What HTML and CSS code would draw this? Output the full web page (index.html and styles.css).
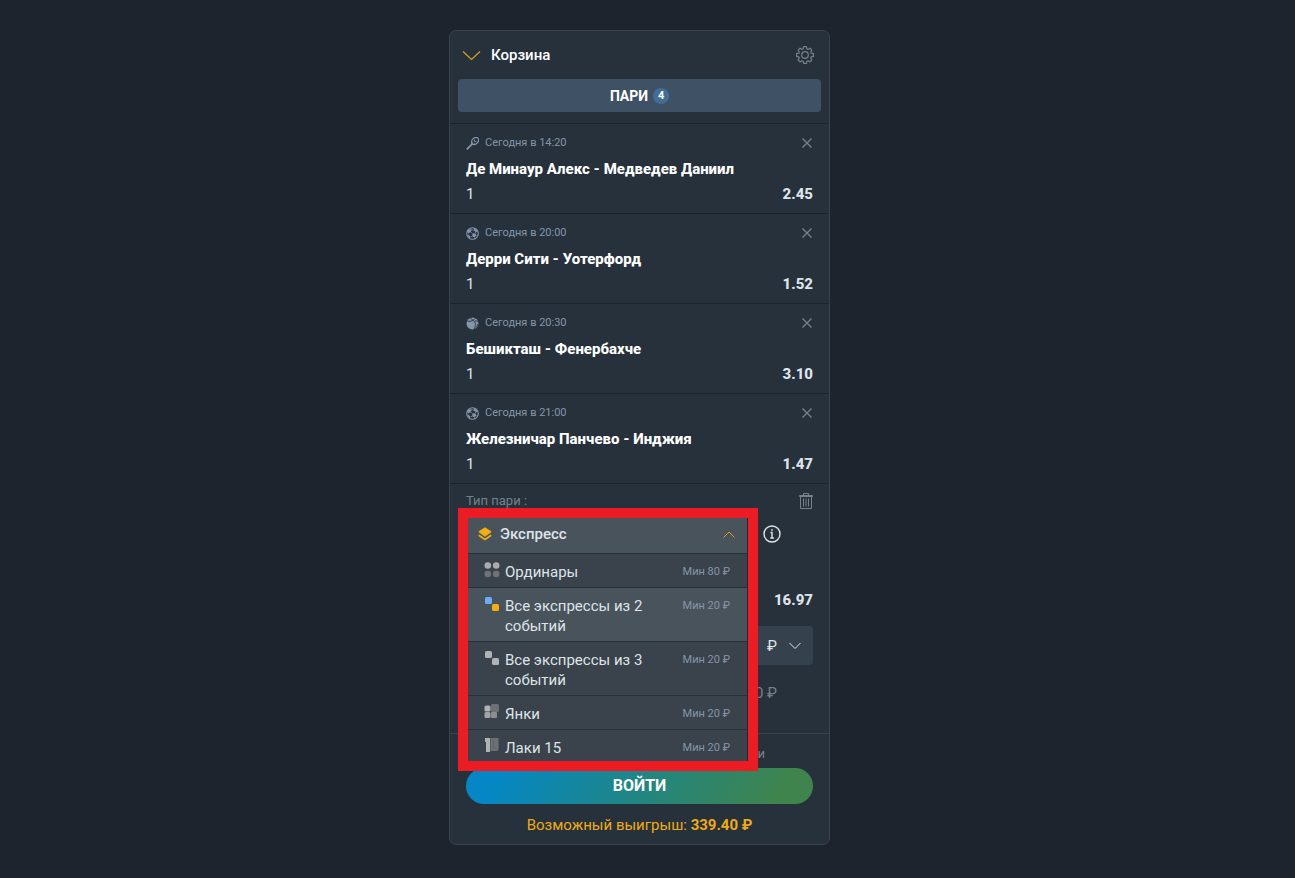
FILE: index.html
```html
<!DOCTYPE html>
<html lang="ru">
<head>
<meta charset="utf-8">
<meta name="viewport" content="width=device-width, initial-scale=1">
<title>Корзина</title>
<link rel="stylesheet" href="styles.css">
</head>
<body>
<svg class="defs" aria-hidden="true">
  <symbol id="close" viewBox="0 0 12 12"><path d="M1.5 1.5l9 9M10.5 1.5l-9 9" fill="none" stroke="currentColor" stroke-width="1.4"/></symbol>
  <symbol id="football" viewBox="0 0 13 13"><circle cx="6.5" cy="6.5" r="5.8" fill="none" stroke="currentColor" stroke-width="1.1"/><path d="M1 4.500L3 2.200l3.200.3L4.500 5 2.600 6.500zM7.800 1l3 1.700.9 2.500-2-.3-1.800-1.400zM6.500 6.500l2.800-.3 1 2.400-1.800 1.900-2.300-1.300zM1 7.500l2 .6 1.200 2L3.700 11.700z" fill="currentColor"/><path d="M6.200 2.500l1.700 1M4.500 5l2 1.500M9.300 6.200l.6-1.300M4.200 10.100l2-.9M8.500 10.500V12M10.300 8.600l1.500.2" stroke="currentColor" stroke-width=".7"/></symbol>
</svg>
<main class="coupon">
  <header class="head">
    <div class="head-row">
      <button class="icon-btn" aria-label="Свернуть"><svg width="19" height="11" viewBox="0 0 19 11"><path d="M1 1.5l8.5 8L18 1.5" fill="none" stroke="#d9a017" stroke-width="1.2"/></svg></button>
      <h1 class="title">Корзина</h1>
      <button class="icon-btn settings" aria-label="Настройки"><svg width="18" height="18" viewBox="0 0 18 18" fill="none" stroke="currentColor" stroke-width="1.200"><path d="M7.6 .7h2.800l.5 2.200 1.200.5L14 2.200l1.900 1.900-1.200 1.900.5 1.200 2.200.4v2.800l-2.200.5-.5 1.200 1.200 1.900-1.900 1.900-1.900-1.200-1.200.5-.5 2.200H7.600l-.5-2.200-1.200-.5L4 15.900 2.100 14l1.200-1.900-.5-1.200-2.200-.5V7.600l2.200-.4.5-1.200L2.100 4.100 4 2.200l1.900 1.200 1.200-.5z" stroke-linejoin="round"/><circle cx="9" cy="9" r="3.300"/></svg></button>
    </div>
    <button class="tab">ПАРИ <span class="badge">4</span></button>
  </header>

  <article class="bet">
    <div class="bet-top"><svg class="sport" width="13" height="13" viewBox="0 0 13 13" fill="none" stroke="currentColor"><ellipse cx="9" cy="4" rx="4" ry="2.900" transform="rotate(-45 9 4)" stroke-width="1.200"/><path d="M6.200 4.500v2.500h2.500M8.500 2.500v2h2" stroke-width=".9"/><path d="M6.300 6.800L.8 12.300" stroke-width="1.800"/></svg><time>Сегодня в 14:20</time><button class="icon-btn close" aria-label="Удалить"><svg width="12" height="12"><use href="#close"/></svg></button></div>
    <h2 class="match">Де Минаур Алекс - Медведев Даниил</h2>
    <div class="pick"><span>1</span><strong>2.45</strong></div>
  </article>
  <article class="bet">
    <div class="bet-top"><svg class="sport" width="13" height="13"><use href="#football"/></svg><time>Сегодня в 20:00</time><button class="icon-btn close" aria-label="Удалить"><svg width="12" height="12"><use href="#close"/></svg></button></div>
    <h2 class="match">Дерри Сити - Уотерфорд</h2>
    <div class="pick"><span>1</span><strong>1.52</strong></div>
  </article>
  <article class="bet">
    <div class="bet-top"><svg class="sport" width="13" height="13" viewBox="0 0 13 13"><circle cx="6.500" cy="6.500" r="6" fill="currentColor"/><path d="M.5 3.800c3 1 6.500.5 9-2.500M3.500 .8c2 .5 3 1.500 3.500 3M7.500 3.800c2.500 2 2.500 5 .5 8.500M8.500 4.200c1.500-.5 3-.3 4 .8M11.800 7c-.5 2-1 3-2 4.500" fill="none" stroke="#26313c" stroke-width=".9"/></svg><time>Сегодня в 20:30</time><button class="icon-btn close" aria-label="Удалить"><svg width="12" height="12"><use href="#close"/></svg></button></div>
    <h2 class="match">Бешикташ - Фенербахче</h2>
    <div class="pick"><span>1</span><strong>3.10</strong></div>
  </article>
  <article class="bet">
    <div class="bet-top"><svg class="sport" width="13" height="13"><use href="#football"/></svg><time>Сегодня в 21:00</time><button class="icon-btn close" aria-label="Удалить"><svg width="12" height="12"><use href="#close"/></svg></button></div>
    <h2 class="match">Железничар Панчево - Инджия</h2>
    <div class="pick"><span>1</span><strong>1.47</strong></div>
  </article>

  <section class="stake">
    <div class="stake-top"><span>Тип пари :</span><button class="icon-btn" aria-label="Очистить"><svg width="14" height="16" viewBox="0 0 14 16" fill="none" stroke="currentColor"><path d="M.5 3.500V2.500h13v1zM4.500 2.500v-2h5v2M1.500 3.500v12h11v-12M4.500 5.500v8M7 5.500v8M9.500 5.500v8"/></svg></button></div>
    <div class="info-row"><button class="icon-btn info" aria-label="Информация"><svg width="18" height="18" viewBox="0 0 18 18" fill="none" stroke="currentColor" stroke-width="1.400"><circle cx="9" cy="9" r="8"/><path d="M7.500 7.500H9v5.500M7.300 13h3.600M8.200 5h1.600"/></svg></button></div>
    <div class="total">16.97</div>
    <div class="money"><button class="currency" aria-label="Валюта">₽ <svg width="12" height="8" viewBox="0 0 12 8"><path d="M.5 1L6 6.500 11.500 1" fill="none" stroke="currentColor"/></svg></button></div>
    <div class="limit">00 ₽</div>

    <div class="picker">
      <button class="picker-head" aria-expanded="true"><svg width="14" height="14" viewBox="0 0 14 14"><path d="M7 .8l6.200 4L7 9.200.8 4.800z" fill="#f5ae0c" stroke="#f5ae0c" stroke-linejoin="round"/><path d="M.8 8.300L7 12.500l6.200-4.200" fill="none" stroke="#f5ae0c" stroke-width="1.700"/></svg><span>Экспресс</span><svg class="up" width="12" height="7" viewBox="0 0 12 7"><path d="M.5 6.500L6 1l5.500 5.500" fill="none" stroke="#d9a017"/></svg></button>
      <ul class="options">
        <li><button class="option"><svg width="16" height="16" viewBox="0 0 16 16"><g fill="#aaadb0"><circle cx="3.800" cy="3.500" r="3.300"/><circle cx="12.200" cy="3.500" r="3.300"/></g><g fill="#6f7375"><circle cx="3.800" cy="12" r="3.300"/><circle cx="12.200" cy="12" r="3.300"/></g></svg><span class="name">Ординары</span><span class="min">Мин 80 ₽</span></button></li>
        <li><button class="option active"><svg width="16" height="16" viewBox="0 0 16 16"><rect x="1" y="1" width="7" height="7" rx="1.500" fill="#69adf5"/><rect x="8" y="8" width="7" height="7" rx="1.500" fill="#f5ae0c"/></svg><span class="name">Все экспрессы из 2 событий</span><span class="min">Мин 20 ₽</span></button></li>
        <li><button class="option"><svg width="16" height="16" viewBox="0 0 16 16" fill="#b0b3b5"><rect x="1" y="1" width="7" height="7" rx="1.500"/><rect x="8" y="8" width="7" height="7" rx="1.500"/></svg><span class="name">Все экспрессы из 3 событий</span><span class="min">Мин 20 ₽</span></button></li>
        <li><button class="option"><svg width="16" height="16" viewBox="0 0 16 16"><rect x="7" y="0" width="8" height="8" rx="1.500" fill="#6d7173"/><rect x="7" y="8" width="6" height="6" rx="1" fill="#8a8e90"/><rect x=".5" y="1.500" width="6" height="6" rx="1.500" fill="#b0b3b5"/><rect x=".5" y="8" width="6" height="6" rx="1.500" fill="#a2a5a7"/></svg><span class="name">Янки</span><span class="min">Мин 20 ₽</span></button></li>
        <li><button class="option"><svg width="16" height="16" viewBox="0 0 16 16"><path d="M1 0h5v14H2V4H1z" fill="#b0b3b5"/><path d="M6.500 0H14.500v11q0 2-2 2h-6z" fill="#6d7173"/><path d="M9.500 2v8M9.500 10h3" fill="none" stroke="#5a6064" stroke-width=".8"/></svg><span class="name">Лаки 15</span><span class="min">Мин 20 ₽</span></button></li>
      </ul>
    </div>
  </section>

  <footer class="foot">
    <p class="terms">и</p>
    <button class="login">ВОЙТИ</button>
    <p class="win">Возможный выигрыш: <b>339.40 ₽</b></p>
  </footer>
</main>
</body>
</html>
```
FILE: styles.css
```css
* { box-sizing: border-box; }
body {
  margin: 0;
  min-height: 100vh;
  padding: 30px 16px 30px 0;
  background: #1e242e;
  color: #dfe4e8;
  font: 15px/20px Roboto, "Noto Sans", sans-serif;
}
h1, h2, p, ul { margin: 0; padding: 0; }
ul { list-style: none; }
button { font: inherit; color: inherit; border: 0; background: none; padding: 0; cursor: pointer; }
svg { display: block; flex: none; }
.defs { position: absolute; width: 0; height: 0; }
.coupon {
  width: 100%;
  max-width: 381px;
  margin: 0 auto;
  border: 1px solid #38434d;
  border-radius: 7px;
  background: #26313c;
}
.icon-btn { display: flex; color: #75818b; }
.head { padding: 12px 8px 11px; }
.head-row { display: flex; align-items: center; gap: 10px; height: 24px; padding: 0 7px 0 4px; }
.title { flex: 1; font-size: 15px; font-weight: 500; color: #fff; }
.tab {
  display: flex; align-items: center; justify-content: center; gap: 5px;
  width: 100%; height: 33px; margin-top: 12px;
  border-radius: 4px; background: #3f5165;
  color: #fff; font-size: 14px; font-weight: 700;
}
.badge { width: 16px; height: 16px; border-radius: 8px; background: #426d94; font-size: 11px; line-height: 16px; text-align: center; }
.bet { height: 90px; padding: 9px 16px 0; border-top: 1px solid #1b242d; }
.bet-top { display: flex; align-items: center; gap: 6px; height: 20px; color: #8595a8; font-size: 11px; line-height: 22px; }
.close { margin-left: auto; }
.match { margin-top: 6px; font-size: 15px; line-height: 20px; font-weight: 800; color: #fff; }
.pick { display: flex; justify-content: space-between; margin-top: 5px; }
.pick strong, .total { font-weight: 800; }
.stake { position: relative; height: 250px; padding: 8px 16px 0; border-top: 1px solid #1b242d; }
.stake-top { display: flex; align-items: center; justify-content: space-between; height: 18px; color: #75818b; font-size: 13px; }
.info-row { display: flex; justify-content: flex-end; height: 48px; padding: 15px 32px 0 0; }
.info { color: #dfe4e8; height: 18px; }
.total { margin-top: 32px; text-align: right; }
.money { display: flex; justify-content: flex-end; margin-top: 16px; }
.currency { display: flex; align-items: center; justify-content: flex-end; gap: 12px; width: 80px; height: 39px; padding-right: 12px; border-radius: 4px; background: #35414d; }
.limit { margin-top: 18px; padding-right: 36px; text-align: right; color: #75818b; }
.picker {
  position: absolute; left: 8px; top: 24px; z-index: 2;
  width: 300px; border: 10px solid #ed1c24; background: #1f2932; padding-right: 1px;
}
.picker-head { display: flex; align-items: center; gap: 8px; width: 100%; height: 35px; padding: 0 12px 3px 10px; background: #49535c; font-weight: 500; }
.up { margin-left: auto; }
.options { height: 208px; overflow: hidden; }
.option { display: flex; align-items: flex-start; gap: 5px; width: 100%; padding: 8px 17px 5px 16px; border-top: 1px solid #26313a; background: #3a434c; text-align: left; }
.option.active { background: #49535c; }
.name { flex: 1; }
.min { flex: none; color: #8595a8; font-size: 11px; }
.foot { padding: 10px 16px 9px; border-top: 1px solid #38434d; }
.terms { padding-right: 48px; text-align: right; color: #75818b; font-size: 13px; }
.login { display: block; width: 100%; height: 36px; margin-top: 4px; border-radius: 18px; background: linear-gradient(120deg, #0487c4 10%, #24867c 55%, #3f844c 90%); color: #fff; font-size: 16px; line-height: 22px; font-weight: 700; }
.win { margin-top: 11px; text-align: center; color: #f0ac0e; }
```
